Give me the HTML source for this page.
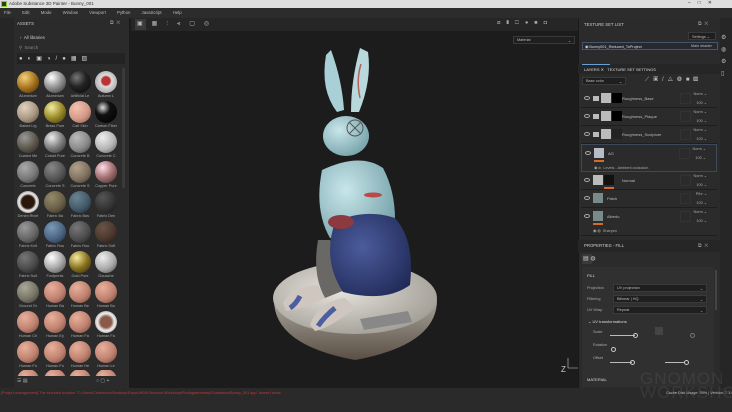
<!DOCTYPE html>
<html><head><meta charset="utf-8"><style>
*{margin:0;padding:0;box-sizing:border-box}
body{width:732px;height:412px;overflow:hidden;background:#1c1c1c;font-family:"Liberation Sans",sans-serif;color:#ccc;position:relative}
.a{position:absolute}
.t{font-size:4.5px;white-space:nowrap}
.s{position:absolute;width:22px;height:22px;border-radius:50%}
.l{position:absolute;font-size:3.8px;color:#aaa;width:26px;text-align:center;white-space:nowrap;overflow:hidden}
.row{position:absolute;left:581px;width:136px;height:18px;border-bottom:1px solid #1e1e1e;background:#2b2b2b}
.eye{position:absolute;left:3px;top:6px;width:6px;height:4px;border-radius:50%;border:1px solid #aaa}
.th{position:absolute;width:10px;height:10px;top:3px;background:#bbb}
.nm{position:absolute;left:41px;top:6px;font-size:4px;color:#bbb}
.bl{position:absolute;right:10px;top:1px;font-size:3.8px;color:#aaa}
.op{position:absolute;right:10px;top:10px;font-size:3.8px;color:#aaa}
.box{position:absolute;right:26px;top:3px;width:11px;height:11px;border:1px solid #333}
.dd{position:absolute;height:8px;background:#1f1f1f;border:1px solid #3a3a3a;font-size:3.8px;color:#bbb;padding:1px 3px}
</style></head><body>
<div class="a" style="left:0;top:0;width:732px;height:8px;background:#dedede"></div>
<div class="a" style="left:1px;top:1px;width:6px;height:6px;background:#2d3b1e;border:1px solid #8c3"></div>
<div class="a t" style="left:9px;top:1px;font-size:4.5px;color:#333">Adobe Substance 3D Painter - Bunny_001</div>
<div class="a t" style="left:688px;top:0px;color:#333;font-size:5px">–&nbsp;&nbsp;&nbsp;&nbsp;&nbsp;□&nbsp;&nbsp;&nbsp;&nbsp;&nbsp;✕</div>
<div class="a" style="left:0;top:8px;width:732px;height:10px;background:#2c2c2c"></div>
<div class="a t" style="left:4px;top:10px;color:#bbb;font-size:4.3px;word-spacing:10px">File Edit Mode Window Viewport Python JavaScript Help</div>
<div class="a" style="left:0;top:18px;width:14px;height:370px;background:#262626"></div>
<div class="a" style="left:14px;top:18px;width:116px;height:370px;background:#2b2b2b;border-right:1px solid #1a1a1a"></div>
<div class="a t" style="left:17px;top:21px;font-size:4.3px;color:#ccc">ASSETS</div>
<div class="a t" style="left:110px;top:20px;color:#999;font-size:5px">⧉&nbsp;&nbsp;✕</div>
<div class="a t" style="left:20px;top:35px;font-size:4.3px;color:#ccc">›&nbsp;&nbsp;All libraries</div>
<div class="a t" style="left:19px;top:45px;font-size:4.3px;color:#888">⚲&nbsp;&nbsp;Search</div>
<div class="a" style="left:17px;top:53px;width:108px;height:11px;background:#232323"></div>
<div class="a t" style="left:19px;top:55px;font-size:6px;color:#ccc;letter-spacing:5px">●◐▣◑/●▦▨</div>
<div class="a" style="left:122px;top:68px;width:3px;height:120px;background:#3a3a3a"></div>
<div class="s" style="left:17px;top:71px;background:radial-gradient(circle at 35% 30%,#f3d07a,#a8741e 50%,#3b2608)"></div>
<div class="s" style="left:44px;top:71px;background:radial-gradient(circle at 35% 30%,#fff,#999 45%,#2a2a2a)"></div>
<div class="s" style="left:69px;top:71px;background:radial-gradient(circle at 35% 30%,#777,#222 45%,#090909)"></div>
<div class="s" style="left:95px;top:71px;background:radial-gradient(circle at 50% 45%,#b33 25%,#ddd 35%,#888)"></div>
<div class="s" style="left:17px;top:101px;background:radial-gradient(circle at 35% 30%,#e2d2c0,#a89682 55%,#4a3e33)"></div>
<div class="s" style="left:44px;top:101px;background:radial-gradient(circle at 35% 30%,#f4eea0,#9a8a2a 50%,#3a320a)"></div>
<div class="s" style="left:69px;top:101px;background:radial-gradient(circle at 35% 30%,#f3c3b0,#d49a88 55%,#7a4f44)"></div>
<div class="s" style="left:95px;top:101px;background:radial-gradient(circle at 35% 30%,#ddd,#111 35%,#000)"></div>
<div class="s" style="left:17px;top:131px;background:radial-gradient(circle at 35% 30%,#999,#5a5548 55%,#222)"></div>
<div class="s" style="left:44px;top:131px;background:radial-gradient(circle at 35% 30%,#eee,#888 45%,#222)"></div>
<div class="s" style="left:69px;top:131px;background:radial-gradient(circle at 35% 30%,#bbb,#8a8a8a 55%,#3a3a3a)"></div>
<div class="s" style="left:95px;top:131px;background:radial-gradient(circle at 35% 30%,#eee,#b5b5b5 55%,#555)"></div>
<div class="s" style="left:17px;top:161px;background:radial-gradient(circle at 35% 30%,#aaa,#777 55%,#333)"></div>
<div class="s" style="left:44px;top:161px;background:radial-gradient(circle at 35% 30%,#888,#555 55%,#222)"></div>
<div class="s" style="left:69px;top:161px;background:radial-gradient(circle at 35% 30%,#b0a28a,#807260 55%,#3a3228)"></div>
<div class="s" style="left:95px;top:161px;background:radial-gradient(circle at 35% 30%,#fde,#a77 45%,#3a2222)"></div>
<div class="s" style="left:17px;top:191px;background:radial-gradient(circle at 50% 50%,#2a160a 40%,#eee 55%,#333)"></div>
<div class="s" style="left:44px;top:191px;background:radial-gradient(circle at 35% 30%,#958a6a,#6a6048 55%,#2a2518)"></div>
<div class="s" style="left:69px;top:191px;background:radial-gradient(circle at 35% 30%,#6a8494,#455a68 55%,#1a252d)"></div>
<div class="s" style="left:95px;top:191px;background:radial-gradient(circle at 35% 30%,#555,#333 55%,#151515)"></div>
<div class="s" style="left:17px;top:221px;background:radial-gradient(circle at 35% 30%,#999,#666 55%,#2a2a2a)"></div>
<div class="s" style="left:44px;top:221px;background:radial-gradient(circle at 35% 30%,#7a9ab8,#4a6482 55%,#1d2838)"></div>
<div class="s" style="left:69px;top:221px;background:radial-gradient(circle at 35% 30%,#777,#4e4e4e 55%,#1e1e1e)"></div>
<div class="s" style="left:95px;top:221px;background:radial-gradient(circle at 35% 30%,#6a5448,#4a382e 55%,#1e1612)"></div>
<div class="s" style="left:17px;top:251px;background:radial-gradient(circle at 35% 30%,#777,#4a4a4a 55%,#1a1a1a)"></div>
<div class="s" style="left:44px;top:251px;background:radial-gradient(circle at 35% 30%,#fff,#aaa 50%,#444)"></div>
<div class="s" style="left:69px;top:251px;background:radial-gradient(circle at 35% 30%,#f8eaa0,#8a7420 50%,#2a2208)"></div>
<div class="s" style="left:95px;top:251px;background:radial-gradient(circle at 35% 30%,#eee,#aaa 55%,#444)"></div>
<div class="s" style="left:17px;top:281px;background:radial-gradient(circle at 35% 30%,#aaa89a,#777565 55%,#333)"></div>
<div class="s" style="left:44px;top:281px;background:radial-gradient(circle at 35% 30%,#e8b09c,#c08270 55%,#6a4238)"></div>
<div class="s" style="left:69px;top:281px;background:radial-gradient(circle at 35% 30%,#e8b09c,#c08270 55%,#6a4238)"></div>
<div class="s" style="left:95px;top:281px;background:radial-gradient(circle at 35% 30%,#e8b09c,#c08270 55%,#6a4238)"></div>
<div class="s" style="left:17px;top:311px;background:radial-gradient(circle at 35% 30%,#e8b09c,#c08270 55%,#6a4238)"></div>
<div class="s" style="left:44px;top:311px;background:radial-gradient(circle at 35% 30%,#e8b09c,#c08270 55%,#6a4238)"></div>
<div class="s" style="left:69px;top:311px;background:radial-gradient(circle at 35% 30%,#e8b09c,#c08270 55%,#6a4238)"></div>
<div class="s" style="left:95px;top:311px;background:radial-gradient(circle at 50% 50%,#8a5a48 35%,#eee 55%,#666)"></div>
<div class="s" style="left:17px;top:341px;background:radial-gradient(circle at 35% 30%,#e8b09c,#c08270 55%,#6a4238)"></div>
<div class="s" style="left:44px;top:341px;background:radial-gradient(circle at 35% 30%,#e8b09c,#c08270 55%,#6a4238)"></div>
<div class="s" style="left:69px;top:341px;background:radial-gradient(circle at 35% 30%,#e8b09c,#c08270 55%,#6a4238)"></div>
<div class="s" style="left:95px;top:341px;background:radial-gradient(circle at 35% 30%,#e8b09c,#c08270 55%,#6a4238)"></div>
<div class="a" style="left:14px;top:370px;width:114px;height:18px;overflow:hidden">
<div class="s" style="left:3px;top:-1px;background:radial-gradient(circle at 35% 30%,#e8b09c,#c08270 55%,#6a4238)"></div>
<div class="s" style="left:30px;top:-1px;background:radial-gradient(circle at 35% 30%,#e8b09c,#c08270 55%,#6a4238)"></div>
<div class="s" style="left:55px;top:-1px;background:radial-gradient(circle at 35% 30%,#e8b09c,#c08270 55%,#6a4238)"></div>
<div class="s" style="left:81px;top:-1px;background:radial-gradient(circle at 35% 30%,#e8b09c,#c08270 55%,#6a4238)"></div>
<div class="a" style="left:0;top:6px;width:114px;height:12px;background:#2b2b2b"></div>
<div class="a t" style="left:3px;top:8px;font-size:5px;color:#aaa">☰ ▤</div>
<div class="a t" style="left:82px;top:8px;font-size:5px;color:#aaa">○ ▢ +</div>
</div>
<div class="l" style="left:15px;top:94px">Aluminium</div><div class="l" style="left:42px;top:94px">Aluminium</div><div class="l" style="left:67px;top:94px">Artificial Le</div><div class="l" style="left:93px;top:94px">Autumn L</div>
<div class="l" style="left:15px;top:124px">Baked Lig</div><div class="l" style="left:42px;top:124px">Brass Pure</div><div class="l" style="left:67px;top:124px">Calf Skin</div><div class="l" style="left:93px;top:124px">Carbon Fiber</div>
<div class="l" style="left:15px;top:154px">Coated Me</div><div class="l" style="left:42px;top:154px">Cobalt Pure</div><div class="l" style="left:67px;top:154px">Concrete B</div><div class="l" style="left:93px;top:154px">Concrete C</div>
<div class="l" style="left:15px;top:184px">Concrete</div><div class="l" style="left:42px;top:184px">Concrete S</div><div class="l" style="left:67px;top:184px">Concrete S</div><div class="l" style="left:93px;top:184px">Copper Pure</div>
<div class="l" style="left:15px;top:214px">Denim Rivet</div><div class="l" style="left:42px;top:214px">Fabric Ba</div><div class="l" style="left:67px;top:214px">Fabric Bas</div><div class="l" style="left:93px;top:214px">Fabric Den</div>
<div class="l" style="left:15px;top:244px">Fabric Knit</div><div class="l" style="left:42px;top:244px">Fabric Rou</div><div class="l" style="left:67px;top:244px">Fabric Rou</div><div class="l" style="left:93px;top:244px">Fabric Soft</div>
<div class="l" style="left:15px;top:274px">Fabric Suit</div><div class="l" style="left:42px;top:274px">Footprints</div><div class="l" style="left:67px;top:274px">Gold Pure</div><div class="l" style="left:93px;top:274px">Gouache</div>
<div class="l" style="left:15px;top:304px">Ground Gr</div><div class="l" style="left:42px;top:304px">Human Ba</div><div class="l" style="left:67px;top:304px">Human Be</div><div class="l" style="left:93px;top:304px">Human Bu</div>
<div class="l" style="left:15px;top:334px">Human Ch</div><div class="l" style="left:42px;top:334px">Human Ey</div><div class="l" style="left:67px;top:334px">Human Fa</div><div class="l" style="left:93px;top:334px">Human Fa</div>
<div class="l" style="left:15px;top:364px">Human Fo</div><div class="l" style="left:42px;top:364px">Human Fo</div><div class="l" style="left:67px;top:364px">Human He</div><div class="l" style="left:93px;top:364px">Human Le</div>
<div class="a" style="left:131px;top:18px;width:447px;height:13px;background:#262626"></div>
<div class="a" style="left:135px;top:19px;width:11px;height:11px;background:#3a3a3a"></div>
<div class="a t" style="left:137px;top:20px;font-size:6px;color:#bbb;letter-spacing:9px">▣▦⫶⫷▢◎</div>
<div class="a t" style="left:497px;top:20px;font-size:5.5px;color:#aaa;letter-spacing:6px">⧄❚▢●■◘</div>
<div class="dd" style="left:513px;top:36px;width:62px">Material<span style="float:right">⌄</span></div>
<svg class="a" style="left:131px;top:31px" width="447" height="357" viewBox="131 31 447 357">
<defs>
<linearGradient id="bs" x1="0" y1="0" x2="0" y2="1"><stop offset="0" stop-color="#a8a49c"/><stop offset="1" stop-color="#5a4f44"/></linearGradient>
<radialGradient id="bt" cx=".4" cy=".4" r=".7"><stop offset="0" stop-color="#e6e3dc"/><stop offset="1" stop-color="#9d9a92"/></radialGradient>
<radialGradient id="bb" cx=".35" cy=".35" r=".8"><stop offset="0" stop-color="#c8e6ea"/><stop offset="1" stop-color="#6d9ba3"/></radialGradient>
<radialGradient id="pn" cx=".4" cy=".4" r=".8"><stop offset="0" stop-color="#4b5c9c"/><stop offset="1" stop-color="#1c2450"/></radialGradient>
</defs>
<path d="M274 300 Q274 345 355 360 Q437 345 437 300 Z" fill="url(#bs)"/>
<ellipse cx="355" cy="298" rx="82" ry="36" fill="url(#bt)"/>
<path d="M326 55 Q320 90 337 112 L344 110 Q342 80 331 50 Z" fill="#a9d0d6"/>
<path d="M360 48 Q351 80 351 112 L359 112 Q372 80 368 52 Z" fill="#b8d8dc"/>
<path d="M361 64 Q356 80 360 98" stroke="#b46060" stroke-width="1.5" fill="none"/>
<ellipse cx="346" cy="136" rx="23" ry="20" fill="url(#bb)"/>
<circle cx="355" cy="128" r="8" fill="none" stroke="#555" stroke-width="1"/>
<path d="M349 122 L361 134 M361 122 L349 134" stroke="#555" stroke-width="1"/>
<path d="M322 170 Q314 210 330 238 L393 245 Q400 200 383 168 Q360 152 322 170 Z" fill="url(#bb)"/>
<path d="M318 240 Q312 275 325 298 L345 290 Q342 258 330 240 Z" fill="#6a6864"/>
<path d="M335 222 Q322 260 343 292 Q385 303 410 285 Q415 240 395 218 Q365 208 335 222 Z" fill="url(#pn)"/>
<ellipse cx="341" cy="222" rx="13" ry="7" fill="#8c3a3e"/>
<ellipse cx="373" cy="195" rx="9" ry="2.5" fill="#b84a4a"/>
<path d="M283 303 Q290 287 318 285 L325 298 Q300 310 286 311 Z" fill="#cfc6c0"/>
<path d="M310 325 Q318 301 345 298 L355 308 Q330 328 315 331 Z" fill="#cfc6c0"/>
<path d="M300 296 Q296 304 290 308" stroke="#4a5ea0" stroke-width="5" fill="none"/>
<path d="M335 308 Q325 316 318 326" stroke="#4a5ea0" stroke-width="5" fill="none"/>
<path d="M360 319 L408 311 L412 322 L364 330 Z" fill="#888"/>
<text x="561" y="372" font-size="8" fill="#ccc" font-family="Liberation Sans">Z</text>
<path d="M568 368 L578 368 M568 368 L568 358" stroke="#ccc" stroke-width=".6"/>
</svg>
<div class="a" style="left:578px;top:18px;width:142px;height:370px;background:#2b2b2b;border-left:1px solid #1a1a1a"></div>
<div class="a" style="left:720px;top:18px;width:12px;height:370px;background:#262626"></div>
<div class="a t" style="left:721px;top:32px;font-size:6px;color:#bbb;line-height:12px">⚙<br>◍<br>⚙<br>▯</div>
<div class="a t" style="left:584px;top:22px;font-size:4.3px;color:#ccc">TEXTURE SET LIST</div>
<div class="a t" style="left:698px;top:21px;font-size:5px;color:#999">⧉&nbsp;&nbsp;✕</div>
<div class="dd" style="left:688px;top:32px;width:28px">Settings ⌄</div>
<div class="a" style="left:582px;top:42px;width:136px;height:8px;border:1px solid #46556a;background:#262a30"></div>
<div class="a t" style="left:585px;top:44px;font-size:3.8px;color:#ddd">◉ Bunny001_Reduced_ToProject</div>
<div class="a t" style="left:691px;top:44px;font-size:3.8px;color:#bbb">Main shader</div>
<div class="a" style="left:578px;top:64px;width:142px;height:10px;background:#262626"></div>
<div class="a" style="left:582px;top:64px;width:28px;height:1px;background:#6aa0d8"></div>
<div class="a t" style="left:584px;top:67px;font-size:4px;color:#ddd">LAYERS ✕&nbsp;&nbsp;&nbsp;TEXTURE SET SETTINGS</div>
<div class="dd" style="left:582px;top:77px;width:44px">Base color<span style="float:right">⌄</span></div>
<div class="a t" style="left:645px;top:77px;font-size:6px;color:#bbb;letter-spacing:4px">⟋▣/◬◍■▥</div>
<div class="row" style="top:90px"><div class="eye"></div><div class="a" style="left:12px;top:6px;width:6px;height:5px;background:#bbb"></div><div class="th" style="left:20px"></div><div class="th" style="left:31px;background:#000"></div><div class="nm">Roughness_Base</div><div class="box"></div><div class="bl">Norm ⌄</div><div class="op">100 ⌄</div></div>
<div class="row" style="top:108px"><div class="eye"></div><div class="a" style="left:12px;top:6px;width:6px;height:5px;background:#bbb"></div><div class="th" style="left:20px"></div><div class="th" style="left:31px;background:#000"></div><div class="nm">Roughness_Plaque</div><div class="box"></div><div class="bl">Norm ⌄</div><div class="op">100 ⌄</div></div>
<div class="row" style="top:126px"><div class="eye"></div><div class="a" style="left:12px;top:6px;width:6px;height:5px;background:#bbb"></div><div class="th" style="left:20px"></div><div class="th" style="left:31px;background:#222"></div><div class="nm">Roughness_Sculpture</div><div class="box"></div><div class="bl">Norm ⌄</div><div class="op">100 ⌄</div></div>
<div class="row" style="top:144px;height:28px;border:1px solid #3c4a5c"><div class="eye"></div><div class="th" style="left:12px;background:#b8bcc8"></div><div class="a" style="left:12px;top:15px;width:10px;height:2px;background:#d86a28"></div><div class="nm" style="left:26px">AO</div><div class="box"></div><div class="bl">Norm ⌄</div><div class="op">100 ⌄</div><div class="a t" style="left:12px;top:20px;font-size:3.8px;color:#aaa">◉ ılı&nbsp;&nbsp;Levels - Ambient occlusion</div></div>
<div class="row" style="top:172px"><div class="eye"></div><div class="th" style="left:12px;background:#bbb"></div><div class="th" style="left:23px;background:#111"></div><div class="a" style="left:23px;top:15px;width:10px;height:2px;background:#d86a28"></div><div class="nm">Normal</div><div class="box"></div><div class="bl">Norm ⌄</div><div class="op">100 ⌄</div></div>
<div class="row" style="top:190px"><div class="eye"></div><div class="th" style="left:12px;background:#7a8a8a"></div><div class="nm" style="left:26px">Patch</div><div class="box"></div><div class="bl">Pthr ⌄</div><div class="op">100 ⌄</div></div>
<div class="row" style="top:208px;height:28px"><div class="eye"></div><div class="th" style="left:12px;background:#7a8a8a"></div><div class="a" style="left:12px;top:15px;width:10px;height:2px;background:#d86a28"></div><div class="nm" style="left:26px">Albedo</div><div class="box"></div><div class="bl">Norm ⌄</div><div class="op">100 ⌄</div><div class="a t" style="left:12px;top:20px;font-size:3.8px;color:#aaa">◉ ◍&nbsp;&nbsp;Sharpen</div></div>
<div class="a" style="left:578px;top:240px;width:142px;height:12px;background:#262626"></div>
<div class="a t" style="left:584px;top:243px;font-size:4.3px;color:#ccc">PROPERTIES - FILL</div>
<div class="a t" style="left:698px;top:243px;font-size:5px;color:#999">⧉&nbsp;&nbsp;✕</div>
<div class="a" style="left:582px;top:254px;width:10px;height:10px;background:#3a3a3a"></div>
<div class="a t" style="left:583px;top:255px;font-size:6px;color:#ccc">▤&nbsp;◍</div>
<div class="a" style="left:582px;top:267px;width:132px;height:120px;background:#303030"></div>
<div class="a t" style="left:587px;top:273px;font-size:4px;color:#ddd">FILL</div>
<div class="a t" style="left:587px;top:286px;font-size:3.8px;color:#aaa">Projection</div>
<div class="a t" style="left:587px;top:297px;font-size:3.8px;color:#aaa">Filtering</div>
<div class="a t" style="left:587px;top:308px;font-size:3.8px;color:#aaa">UV Wrap</div>
<div class="dd" style="left:613px;top:284px;width:94px">UV projection<span style="float:right">⌄</span></div>
<div class="dd" style="left:613px;top:295px;width:94px">Bilinear | HQ<span style="float:right">⌄</span></div>
<div class="dd" style="left:613px;top:306px;width:94px">Repeat<span style="float:right">⌄</span></div>
<div class="a t" style="left:588px;top:319px;font-size:4px;color:#ddd">⌄ UV transformations</div>
<div class="a t" style="left:593px;top:330px;font-size:3.8px;color:#aaa">Scale</div>
<div class="a t" style="left:593px;top:343px;font-size:3.8px;color:#aaa">Rotation</div>
<div class="a t" style="left:593px;top:356px;font-size:3.8px;color:#aaa">Offset</div>
<div class="a" style="left:610px;top:335px;width:25px;height:1px;background:#bbb"></div><div class="a" style="left:633px;top:333px;width:5px;height:5px;border-radius:50%;border:1px solid #ccc"></div>
<div class="a" style="left:655px;top:327px;width:8px;height:8px;background:#444"></div>
<div class="a" style="left:690px;top:333px;width:5px;height:5px;border-radius:50%;border:1px solid #777"></div>
<div class="a" style="left:611px;top:347px;width:5px;height:5px;border-radius:50%;border:1px solid #ccc"></div>
<div class="a" style="left:610px;top:362px;width:22px;height:1px;background:#bbb"></div><div class="a" style="left:630px;top:360px;width:5px;height:5px;border-radius:50%;border:1px solid #ccc"></div>
<div class="a" style="left:665px;top:362px;width:20px;height:1px;background:#bbb"></div><div class="a" style="left:684px;top:360px;width:5px;height:5px;border-radius:50%;border:1px solid #ccc"></div>
<div class="a" style="left:715px;top:270px;width:2px;height:40px;background:#444"></div>
<div class="a t" style="left:587px;top:377px;font-size:4px;color:#ddd">MATERIAL</div>
<div class="a" style="left:0;top:388px;width:732px;height:24px;background:#2a2a2a"></div>
<div class="a t" style="left:1px;top:391px;font-size:3.8px;color:#c03a3a">[Project management] The selected location "C:/Users/Charleston/Desktop/Export/HD9/Gnomon Workshop/Photogrammetry/Substance/Bunny_001.spp" doesn't exist!</div>
<div class="a t" style="left:666px;top:391px;font-size:3.8px;color:#bbb">Cache Disk Usage: 59% | Version: 7.3.0</div>
<div class="a t" style="left:640px;top:372px;font-size:17px;color:rgba(200,200,200,.09);letter-spacing:1px;line-height:14px">GNOMON<br>WORKSHOP</div>
</body></html>
